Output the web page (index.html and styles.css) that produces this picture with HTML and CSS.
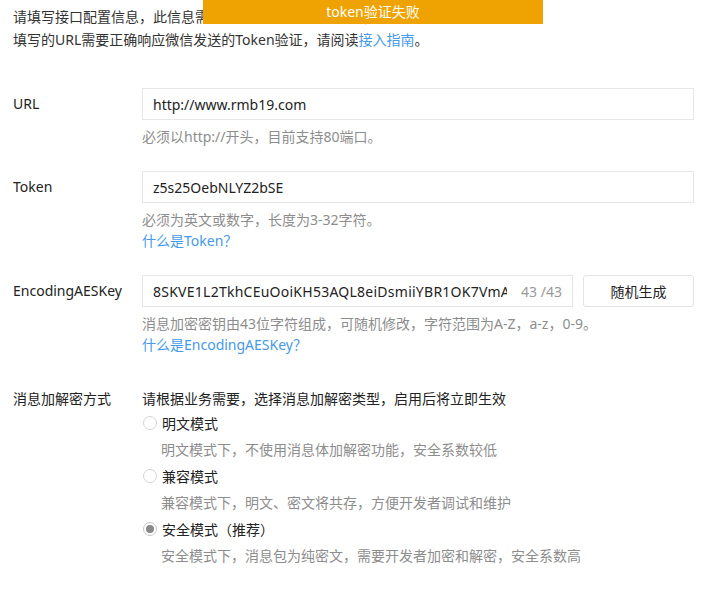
FILE: index.html
```html
<!DOCTYPE html>
<html lang="zh-CN">
<head>
<meta charset="utf-8">
<title>服务器配置</title>
<link rel="stylesheet" href="styles.css">
</head>
<body>
<div class="toast">token验证失败</div>
<div class="page">
  <div class="intro">
    <p>请填写接口配置信息，此信息需要你有自己的服务器资源，</p>
    <p>填写的URL需要正确响应微信发送的Token验证，请阅读<a class="link" href="#">接入指南</a>。</p>
  </div>

  <div class="row">
    <div class="label">URL</div>
    <div class="field">
      <div class="input"><span class="value">http://www.rmb19.com</span></div>
      <p class="help">必须以http://开头，目前支持80端口。</p>
    </div>
  </div>

  <div class="row">
    <div class="label">Token</div>
    <div class="field">
      <div class="input"><span class="value">z5s25OebNLYZ2bSE</span></div>
      <p class="help">必须为英文或数字，长度为3-32字符。</p>
      <p class="help"><a class="link" href="#">什么是Token？</a></p>
    </div>
  </div>

  <div class="row">
    <div class="label">EncodingAESKey</div>
    <div class="field">
      <div class="key-line">
        <div class="input input-key"><span class="value clip">8SKVE1L2TkhCEuOoiKH53AQL8eiDsmiiYBR1OK7VmAc</span><span class="count">43 /43</span></div>
        <button class="btn" type="button">随机生成</button>
      </div>
      <p class="help">消息加密密钥由43位字符组成，可随机修改，字符范围为A-Z，a-z，0-9。</p>
      <p class="help"><a class="link" href="#">什么是EncodingAESKey？</a></p>
    </div>
  </div>

  <div class="row row-mode">
    <div class="label label-text">消息加解密方式</div>
    <div class="field">
      <p class="mode-intro">请根据业务需要，选择消息加解密类型，启用后将立即生效</p>
      <div class="option"><span class="radio"></span><span>明文模式</span></div>
      <p class="option-desc">明文模式下，不使用消息体加解密功能，安全系数较低</p>
      <div class="option"><span class="radio"></span><span>兼容模式</span></div>
      <p class="option-desc">兼容模式下，明文、密文将共存，方便开发者调试和维护</p>
      <div class="option"><span class="radio checked"></span><span>安全模式（推荐）</span></div>
      <p class="option-desc">安全模式下，消息包为纯密文，需要开发者加密和解密，安全系数高</p>
    </div>
  </div>
</div>
</body>
</html>
```
FILE: styles.css
```css
* { box-sizing: border-box; }
html, body { margin: 0; padding: 0; background: #fff; }
body {
  font-family: "Noto Sans", "Noto Sans CJK SC", sans-serif;
  font-size: 14px;
  color: #222;
}
p { margin: 0; }
.toast {
  position: fixed;
  top: 0;
  left: 203px;
  width: 340px;
  height: 24px;
  line-height: 24px;
  background: #efa302;
  color: #fff;
  text-align: center;
  font-size: 14px;
}
.page { padding: 5px 0 12px 13px; }
.intro p { line-height: 23px; color: #333; }
.intro { margin-bottom: 37px; }
.link { color: #459ae9; text-decoration: none; }
.row { display: flex; margin-bottom: 24px; }
.row:last-child { margin-bottom: 0; }
.label { width: 129px; flex: none; line-height: 32px; color: #222; }
.field { width: 552px; }
.input {
  height: 32px;
  border: 1px solid #e7e7e7;
  display: flex;
  align-items: center;
  padding: 0 10px;
  color: #222;
}
.help { line-height: 21px; color: #8d8d8d; }
.input + .help, .key-line + .help { margin-top: 6px; }
.key-line { display: flex; gap: 10px; }
.input-key { width: 431px; flex: none; }
.clip { flex: 1; overflow: hidden; white-space: nowrap; min-width: 0; letter-spacing: 0.25px; }
.count { color: #999; margin-left: 14px; white-space: nowrap; }
.btn {
  width: 111px;
  height: 32px;
  border: 1px solid #e4e4e4;
  border-radius: 3px;
  background: #fff;
  font: inherit;
  color: #222;
  padding: 0;
}
.row-mode { margin-top: 33px; }
.label-text { line-height: 21px; }
.mode-intro { line-height: 21px; margin-bottom: 1px; }
.option { display: flex; align-items: center; height: 26.5px; padding-left: 1px; }
.option-desc { line-height: 26.5px; padding-left: 19px; color: #8d8d8d; }
.radio {
  width: 14px;
  height: 14px;
  border: 1px solid #d6d6d6;
  border-radius: 50%;
  margin-right: 5px;
  background: #fff;
  position: relative;
}
.radio.checked { border-color: #c8c8c8; }
.radio.checked::after {
  content: "";
  position: absolute;
  left: 2px; top: 2px;
  width: 8px; height: 8px;
  border-radius: 50%;
  background: #888;
}
```
